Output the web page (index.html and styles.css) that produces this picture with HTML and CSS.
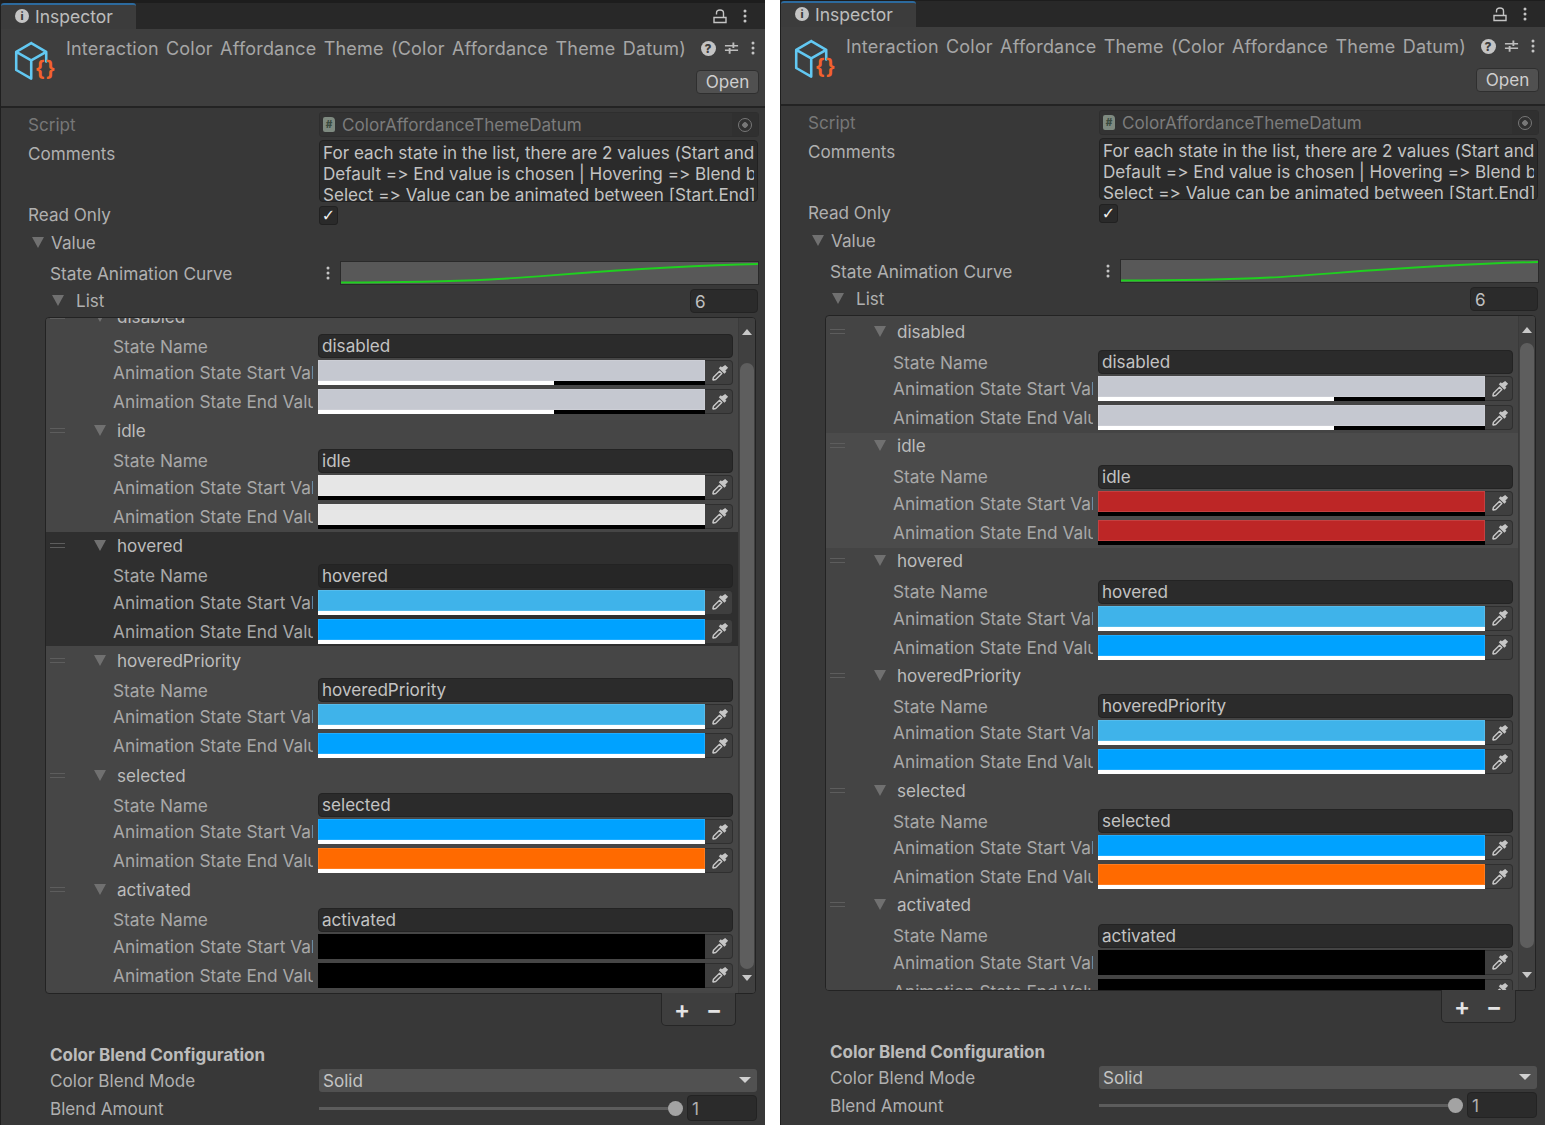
FILE: index.html
```html
<!DOCTYPE html>
<html lang="en">
<head>
<meta charset="utf-8">
<title>Inspector</title>
<link rel="stylesheet" href="styles.css">
</head>
<body>
<svg class="defs" width="0" height="0" aria-hidden="true">
  <symbol id="dropper" viewBox="0 0 16 16">
    <path d="M12.6.8l2.6 2.6-2.5 2.5 1 1-1.8 1.8-5-5 1.8-1.8 1 1z" fill="#c6c6c6"/>
    <path d="M7.6 6.4l2 2-5.4 5.4-2.2.5-.3-.3.5-2.2z" fill="none" stroke="#c6c6c6" stroke-width="1.3" stroke-linejoin="round"/>
  </symbol>
  <symbol id="cube" viewBox="0 0 42 40">
    <path d="M17 2 L31 10 V19 M17 2 L3 10 V27 L17 35 M3 10 L17 18 L31 10 M17 18 V35" fill="none" stroke="#62c8f2" stroke-width="2.4" stroke-linejoin="round" stroke-linecap="round"/>
  </symbol>
  <symbol id="lock" viewBox="0 0 14 15">
    <path d="M1 8.5h12v5H1zM3.5 5.5V4a3.5 3 0 0 1 7 0v4.5" fill="none" stroke="#c4c4c4" stroke-width="1.4"/>
  </symbol>
  <symbol id="sliders" viewBox="0 0 16 14">
    <path d="M1 4.5h14M1 9.5h14" stroke="#bdbdbd" stroke-width="1.6"/>
    <path d="M10 1v6M6 7v6" stroke="#bdbdbd" stroke-width="2"/>
  </symbol>
  <symbol id="dots" viewBox="0 0 4 14">
    <circle cx="2" cy="2" r="1.5" fill="#c4c4c4"/><circle cx="2" cy="7" r="1.5" fill="#c4c4c4"/><circle cx="2" cy="12" r="1.5" fill="#c4c4c4"/>
  </symbol>
</svg>
<main class="page">

<section class="panel panel-a">
  <header class="tabbar">
    <div class="tab"><span class="info-ic">i</span><span>Inspector</span></div>
    <div class="tab-tools">
      <svg class="ic-lock"><use href="#lock"/></svg>
      <svg class="ic-dots"><use href="#dots"/></svg>
    </div>
  </header>
  <div class="head">
    <div class="logo"><svg class="ic-cube"><use href="#cube"/></svg><span class="braces">{}</span></div>
    <div class="head-title">Interaction Color Affordance Theme (Color Affordance Theme Datum)</div>
    <div class="head-tools">
      <span class="help-ic">?</span>
      <svg class="ic-sliders"><use href="#sliders"/></svg>
      <svg class="ic-dots"><use href="#dots"/></svg>
    </div>
    <button class="open-btn">Open</button>
  </div>
  <div class="body">
    <div class="row row-script">
      <label class="lab lab-dim">Script</label>
      <div class="script-field"><span class="script-ic">#</span><span class="script-name">ColorAffordanceThemeDatum</span><span class="picker"><i></i></span></div>
    </div>
    <div class="row row-comments">
      <label class="lab lab-top">Comments</label>
      <div class="textarea"><div>For each state in the list, there are 2 values (Start and End).</div><div>Default =&gt; End value is chosen | Hovering =&gt; Blend between values</div><div>Select =&gt; Value can be animated between [Start,End]</div></div>
    </div>
    <div class="row row-read">
      <label class="lab">Read Only</label>
      <span class="check">✓</span>
    </div>
    <div class="row row-value">
      <span class="tri"></span><span class="lab">Value</span>
    </div>
    <div class="row row-curve">
      <label class="lab lab-in1">State Animation Curve</label>
      <svg class="ic-dots ic-dots-curve"><use href="#dots"/></svg>
      <div class="curve"><svg viewBox="0 0 420 22" preserveAspectRatio="none"><path d="M0 20.5 C60 20.5 100 20 150 17.5 S310 4 420 2" fill="none" stroke="#1fd01f" stroke-width="1.8"/></svg></div>
    </div>
    <div class="row row-list">
      <span class="tri tri-list"></span><span class="lab">List</span>
      <div class="count">6</div>
    </div>
    <div class="listbox">
      <div class="list-clip">
        <div class="list-inner scrolled">
          <div class="el"><div class="el-h"><span class="grip"></span><span class="tri tri-el"></span><span class="el-name">disabled</span></div>
            <div class="f f-name"><label>State Name</label><div class="input">disabled</div></div>
            <div class="f f-start"><label>Animation State Start Value</label><div class="color c-grey"><b></b></div><span class="drop"><svg><use href="#dropper"/></svg></span></div>
            <div class="f f-end"><label>Animation State End Value</label><div class="color c-grey"><b></b></div><span class="drop"><svg><use href="#dropper"/></svg></span></div></div>
          <div class="el"><div class="el-h"><span class="grip"></span><span class="tri tri-el"></span><span class="el-name">idle</span></div>
            <div class="f f-name"><label>State Name</label><div class="input">idle</div></div>
            <div class="f f-start"><label>Animation State Start Value</label><div class="color c-white a0"><b></b></div><span class="drop"><svg><use href="#dropper"/></svg></span></div>
            <div class="f f-end"><label>Animation State End Value</label><div class="color c-white a0"><b></b></div><span class="drop"><svg><use href="#dropper"/></svg></span></div></div>
          <div class="el el-hover"><div class="el-h"><span class="grip"></span><span class="tri tri-el"></span><span class="el-name">hovered</span></div>
            <div class="f f-name"><label>State Name</label><div class="input">hovered</div></div>
            <div class="f f-start"><label>Animation State Start Value</label><div class="color c-sky a1"><b></b></div><span class="drop"><svg><use href="#dropper"/></svg></span></div>
            <div class="f f-end"><label>Animation State End Value</label><div class="color c-blue a1"><b></b></div><span class="drop"><svg><use href="#dropper"/></svg></span></div></div>
          <div class="el"><div class="el-h"><span class="grip"></span><span class="tri tri-el"></span><span class="el-name">hoveredPriority</span></div>
            <div class="f f-name"><label>State Name</label><div class="input">hoveredPriority</div></div>
            <div class="f f-start"><label>Animation State Start Value</label><div class="color c-sky a1"><b></b></div><span class="drop"><svg><use href="#dropper"/></svg></span></div>
            <div class="f f-end"><label>Animation State End Value</label><div class="color c-blue a1"><b></b></div><span class="drop"><svg><use href="#dropper"/></svg></span></div></div>
          <div class="el"><div class="el-h"><span class="grip"></span><span class="tri tri-el"></span><span class="el-name">selected</span></div>
            <div class="f f-name"><label>State Name</label><div class="input">selected</div></div>
            <div class="f f-start"><label>Animation State Start Value</label><div class="color c-blue a1"><b></b></div><span class="drop"><svg><use href="#dropper"/></svg></span></div>
            <div class="f f-end"><label>Animation State End Value</label><div class="color c-orange a1"><b></b></div><span class="drop"><svg><use href="#dropper"/></svg></span></div></div>
          <div class="el"><div class="el-h"><span class="grip"></span><span class="tri tri-el"></span><span class="el-name">activated</span></div>
            <div class="f f-name"><label>State Name</label><div class="input">activated</div></div>
            <div class="f f-start"><label>Animation State Start Value</label><div class="color c-black"><b></b></div><span class="drop"><svg><use href="#dropper"/></svg></span></div>
            <div class="f f-end"><label>Animation State End Value</label><div class="color c-black"><b></b></div><span class="drop"><svg><use href="#dropper"/></svg></span></div></div>
        </div>
      </div>
      <div class="scrollbar">
        <span class="arrow-up"></span>
        <span class="track"><i class="thumb"></i></span>
        <span class="arrow-down"></span>
      </div>
    </div>
    <div class="list-foot"><span class="plus">+</span><span class="minus">−</span></div>
    <div class="section">Color Blend Configuration</div>
    <div class="row row-mode">
      <label class="lab lab-in1">Color Blend Mode</label>
      <div class="dropdown"><span>Solid</span><i></i></div>
    </div>
    <div class="row row-amount">
      <label class="lab lab-in1">Blend Amount</label>
      <div class="slider"><i></i></div>
      <div class="amount">1</div>
    </div>
  </div>
</section>

<section class="panel panel-b">
  <header class="tabbar">
    <div class="tab"><span class="info-ic">i</span><span>Inspector</span></div>
    <div class="tab-tools">
      <svg class="ic-lock"><use href="#lock"/></svg>
      <svg class="ic-dots"><use href="#dots"/></svg>
    </div>
  </header>
  <div class="head">
    <div class="logo"><svg class="ic-cube"><use href="#cube"/></svg><span class="braces">{}</span></div>
    <div class="head-title">Interaction Color Affordance Theme (Color Affordance Theme Datum)</div>
    <div class="head-tools">
      <span class="help-ic">?</span>
      <svg class="ic-sliders"><use href="#sliders"/></svg>
      <svg class="ic-dots"><use href="#dots"/></svg>
    </div>
    <button class="open-btn">Open</button>
  </div>
  <div class="body">
    <div class="row row-script">
      <label class="lab lab-dim">Script</label>
      <div class="script-field"><span class="script-ic">#</span><span class="script-name">ColorAffordanceThemeDatum</span><span class="picker"><i></i></span></div>
    </div>
    <div class="row row-comments">
      <label class="lab lab-top">Comments</label>
      <div class="textarea"><div>For each state in the list, there are 2 values (Start and End).</div><div>Default =&gt; End value is chosen | Hovering =&gt; Blend between values</div><div>Select =&gt; Value can be animated between [Start,End]</div></div>
    </div>
    <div class="row row-read">
      <label class="lab">Read Only</label>
      <span class="check">✓</span>
    </div>
    <div class="row row-value">
      <span class="tri"></span><span class="lab">Value</span>
    </div>
    <div class="row row-curve">
      <label class="lab lab-in1">State Animation Curve</label>
      <svg class="ic-dots ic-dots-curve"><use href="#dots"/></svg>
      <div class="curve"><svg viewBox="0 0 420 22" preserveAspectRatio="none"><path d="M0 20.5 C60 20.5 100 20 150 17.5 S310 4 420 2" fill="none" stroke="#1fd01f" stroke-width="1.8"/></svg></div>
    </div>
    <div class="row row-list">
      <span class="tri tri-list"></span><span class="lab">List</span>
      <div class="count">6</div>
    </div>
    <div class="listbox">
      <div class="list-clip">
        <div class="list-inner">
          <div class="el"><div class="el-h"><span class="grip"></span><span class="tri tri-el"></span><span class="el-name">disabled</span></div>
            <div class="f f-name"><label>State Name</label><div class="input">disabled</div></div>
            <div class="f f-start"><label>Animation State Start Value</label><div class="color c-grey"><b></b></div><span class="drop"><svg><use href="#dropper"/></svg></span></div>
            <div class="f f-end"><label>Animation State End Value</label><div class="color c-grey"><b></b></div><span class="drop"><svg><use href="#dropper"/></svg></span></div></div>
          <div class="el"><div class="el-h"><span class="grip"></span><span class="tri tri-el"></span><span class="el-name">idle</span></div>
            <div class="f f-name"><label>State Name</label><div class="input">idle</div></div>
            <div class="f f-start"><label>Animation State Start Value</label><div class="color c-red a0"><b></b></div><span class="drop"><svg><use href="#dropper"/></svg></span></div>
            <div class="f f-end"><label>Animation State End Value</label><div class="color c-red a0"><b></b></div><span class="drop"><svg><use href="#dropper"/></svg></span></div></div>
          <div class="el"><div class="el-h"><span class="grip"></span><span class="tri tri-el"></span><span class="el-name">hovered</span></div>
            <div class="f f-name"><label>State Name</label><div class="input">hovered</div></div>
            <div class="f f-start"><label>Animation State Start Value</label><div class="color c-sky a1"><b></b></div><span class="drop"><svg><use href="#dropper"/></svg></span></div>
            <div class="f f-end"><label>Animation State End Value</label><div class="color c-blue a1"><b></b></div><span class="drop"><svg><use href="#dropper"/></svg></span></div></div>
          <div class="el"><div class="el-h"><span class="grip"></span><span class="tri tri-el"></span><span class="el-name">hoveredPriority</span></div>
            <div class="f f-name"><label>State Name</label><div class="input">hoveredPriority</div></div>
            <div class="f f-start"><label>Animation State Start Value</label><div class="color c-sky a1"><b></b></div><span class="drop"><svg><use href="#dropper"/></svg></span></div>
            <div class="f f-end"><label>Animation State End Value</label><div class="color c-blue a1"><b></b></div><span class="drop"><svg><use href="#dropper"/></svg></span></div></div>
          <div class="el"><div class="el-h"><span class="grip"></span><span class="tri tri-el"></span><span class="el-name">selected</span></div>
            <div class="f f-name"><label>State Name</label><div class="input">selected</div></div>
            <div class="f f-start"><label>Animation State Start Value</label><div class="color c-blue a1"><b></b></div><span class="drop"><svg><use href="#dropper"/></svg></span></div>
            <div class="f f-end"><label>Animation State End Value</label><div class="color c-orange a1"><b></b></div><span class="drop"><svg><use href="#dropper"/></svg></span></div></div>
          <div class="el"><div class="el-h"><span class="grip"></span><span class="tri tri-el"></span><span class="el-name">activated</span></div>
            <div class="f f-name"><label>State Name</label><div class="input">activated</div></div>
            <div class="f f-start"><label>Animation State Start Value</label><div class="color c-black"><b></b></div><span class="drop"><svg><use href="#dropper"/></svg></span></div>
            <div class="f f-end"><label>Animation State End Value</label><div class="color c-black"><b></b></div><span class="drop"><svg><use href="#dropper"/></svg></span></div></div>
        </div>
      </div>
      <div class="scrollbar">
        <span class="arrow-up"></span>
        <span class="track"><i class="thumb"></i></span>
        <span class="arrow-down"></span>
      </div>
    </div>
    <div class="list-foot"><span class="plus">+</span><span class="minus">−</span></div>
    <div class="section">Color Blend Configuration</div>
    <div class="row row-mode">
      <label class="lab lab-in1">Color Blend Mode</label>
      <div class="dropdown"><span>Solid</span><i></i></div>
    </div>
    <div class="row row-amount">
      <label class="lab lab-in1">Blend Amount</label>
      <div class="slider"><i></i></div>
      <div class="amount">1</div>
    </div>
  </div>
</section>

</main>
</body>
</html>
```

FILE: styles.css
```css
* { box-sizing: border-box; }
html, body { margin: 0; padding: 0; background: #fff; height: 1125px; overflow: hidden; }
body { font-family: Inter, "Liberation Sans", sans-serif; font-size: 17.1px; color: #b4b4b4; font-feature-settings: "calt" 0; font-variant-ligatures: none; }
.defs { position: absolute; }
.page { display: flex; gap: 15px; align-items: flex-start; height: 1125px; }

.panel { width: 765px; height: 1125px; background: #383838; border-left: 1px solid #1f1f1f; overflow: hidden; flex: none; }
.panel-a { padding-top: 3px; background: linear-gradient(#1d1d1d 3px, #383838 3px); }
.panel-b { padding-top: 1px; background: linear-gradient(#1d1d1d 1px, #383838 1px); }

/* tab bar */
.tabbar { height: 26px; background: #282828; display: flex; justify-content: space-between; }
.tab { width: 135px; background: #3c3c3c; border-top: 2px solid #2c6a9e; display: flex; align-items: center; gap: 6px; padding: 0 0 2px 14px; color: #bdbdbd; border-radius: 3px 3px 0 0; font-size: 17.5px; }
.info-ic { width: 14px; height: 14px; border-radius: 50%; background: #c4c4c4; color: #3c3c3c; font-size: 11px; font-weight: 800; line-height: 14px; text-align: center; }
.tab-tools { display: flex; align-items: center; gap: 16px; padding-right: 18px; }
.ic-lock { width: 14px; height: 15px; }
.ic-dots { width: 4px; height: 14px; }

/* header */
.head { position: relative; height: 79px; background: #3e3e3e; border-bottom: 2px solid #232323; display: grid; grid-template-columns: 65px 1fr 60px; grid-template-rows: 38px 24px; padding-right: 6px; }
.logo { position: relative; grid-row: 1 / 3; padding: 12px 0 0 12px; }
.ic-cube { display: block; width: 45px; height: 43px; }
.braces { position: absolute; left: 34px; top: 28px; color: #f2622e; font-size: 21px; font-weight: 700; line-height: 24px; letter-spacing: 1px; }
.head-title { font-size: 18px; color: #a6a6a6; letter-spacing: .2px; word-spacing: 2px; white-space: nowrap; padding-top: 8px; line-height: 24px; }
.head-tools { display: flex; align-items: center; padding-left: 1.5px; height: 38px; margin-top: 0; }
.help-ic { width: 15px; height: 15px; border-radius: 50%; background: #c4c4c4; color: #3e3e3e; font-size: 12px; font-weight: 800; line-height: 15px; text-align: center; flex: none; }
.ic-sliders { width: 15px; height: 14px; margin: 0 12.5px 0 8px; flex: none; }
.open-btn { grid-column: 3; grid-row: 2; justify-self: end; margin: 3px 0 0; width: 63px; height: 24px; padding: 0; background: #505050; border: 1px solid #2f2f2f; border-radius: 4px; font: inherit; color: #cfcfcf; line-height: 20px; }

/* body rows */
.body { padding: 4px 6px 0 27px; }
.row { display: flex; align-items: center; }
.lab { color: #b0b0b0; white-space: nowrap; }
.lab-dim { color: #777; }
.row > .lab:first-child { width: 291px; flex: none; }
.row-script { height: 25px; }
.script-field { width: 440px; height: 25px; background: #333; border: 1px solid #2e2e2e; border-radius: 3px; display: flex; align-items: center; padding-left: 3px; color: #7c7c7c; position: relative; margin-right: -1px; }
.script-ic { width: 12px; height: 15px; background: #7e8a80; color: #3a4a3e; font-size: 10px; font-weight: 800; line-height: 15px; text-align: center; border-radius: 2px 4px 2px 2px; margin-right: 7px; }
.script-name { flex: 1; }
.picker { width: 26px; height: 23px; background: #303030; display: flex; align-items: center; justify-content: center; }
.picker i { width: 14px; height: 14px; border: 1.5px solid #777; border-radius: 50%; background: radial-gradient(circle, #777 2.5px, transparent 3px); }

.row-comments { align-items: flex-start; margin-top: 3px; height: 62px; }
.lab-top { padding-top: 3px; }
.textarea { width: 439px; height: 62px; overflow: hidden; background: #2b2b2b; border: 1px solid #212121; border-radius: 4px; padding: .5px 3px; line-height: 21px; color: #c3c3c3; white-space: nowrap; }
.textarea div { overflow: hidden; }
.row-read { height: 25px; }
.check { width: 19px; height: 19px; background: #2a2a2a; border: 1px solid #212121; border-radius: 3px; color: #f0f0f0; font-size: 16px; line-height: 17px; text-align: center; font-weight: 700; font-family: "DejaVu Sans", sans-serif; margin-top: 1px; }
.row-value { height: 31px; padding-left: 4px; }
.row-value .tri { margin-right: 7px; }
.tri { width: 0; height: 0; border-left: 6.5px solid transparent; border-right: 6.5px solid transparent; border-top: 11px solid #707070; flex: none; }
.row-curve { height: 30px; position: relative; }
.row .lab-in1 { padding-left: 22px; }
.ic-dots-curve { flex: none; margin-right: 10px; }
.row-curve > .lab { width: 298px !important; font-size: 17.3px; }
.curve { width: 419px; height: 24px; margin-right: -5px; flex: none; background: #585858; border: 1px solid #2a2a2a; }
.curve svg { display: block; width: 100%; height: 100%; }
.row-list { height: 25px; padding-left: 24px; }
.tri-list { margin-right: 12px; }
.row-list .lab { flex: 1; }
.count { width: 68px; height: 24px; background: #2b2b2b; border: 1px solid #232323; border-radius: 4px; padding-left: 4px; color: #c0c0c0; line-height: 24px; margin-right: 1px; flex: none; }

/* list */
.listbox { margin: 4px 3px 0 17px; height: 677px; border: 1px solid #232323; border-radius: 4px; display: flex; background: #454545; overflow: hidden; }
.panel-b .listbox { height: 676px; }
.list-clip { flex: 1; overflow: hidden; }
.list-inner { margin-top: 2px; }
.list-inner.scrolled { margin-top: -16px; }
.el { height: 114.75px; }
.panel-a .el { background: #464646; }
.panel-a .el.el-hover { background: #2f2f2f; }
.panel-b .el { background: #444; }
.panel-b .el:nth-child(2) { background: #4b4b4b; }
.el-h { height: 26px; display: flex; align-items: center; color: #bcbcbc; }
.scrolled .el-h { height: 28px; }
.grip { width: 15px; height: 5px; border-top: 1px solid #5d5d5d; border-bottom: 1px solid #5d5d5d; margin: 0 29px 0 4px; }
.tri-el { margin-right: 11px; }
.el-name { white-space: nowrap; }
.f { display: flex; align-items: center; padding-left: 67px; }
.f label { width: 200px; margin-right: 5px; flex: none; overflow: hidden; white-space: nowrap; color: #a8a8a8; font-size: 17.3px; }
.f-name { height: 24px; margin-top: 6px; }
.scrolled .f-name { margin-top: 4px; }
.f-start { height: 25px; margin-top: 2px; }
.f-end { height: 25px; margin-top: 4px; }
.input { width: 415px; height: 24px; background: #2b2b2b; border: 1px solid #232323; border-radius: 4px; padding-left: 3px; color: #c3c3c3; line-height: 22px; }
.el-hover .input { background: #262626; }
.color { width: 387px; height: 25px; background: #333; display: flex; flex-direction: column; flex: none; position: relative; }
.color::before { content: ""; flex: 1; display: block; background: var(--swatch); border: 1px solid rgba(255,255,255,.12); }
.color b { display: block; height: 4px; flex: none; background: linear-gradient(90deg, #fff 61%, #000 61%); }
.color.a0 b { background: #000; }
.color.a1 b { background: #fff; }
.color.c-black b { background: #000; }
.c-grey { --swatch: #c5c8d0; }
.c-white { --swatch: #e6e6e6; }
.c-sky { --swatch: #3fb3ea; }
.c-blue { --swatch: #00a2ff; }
.c-orange { --swatch: #ff6a00; }
.c-black { --swatch: #000; }
.c-red { --swatch: #bd2626; }
.color.c-black::before { border: 0; }
.drop { width: 28px; height: 25px; flex: none; background: #3f3f3f; border: 1px solid #2f2f2f; border-left: 0; border-radius: 0 4px 4px 0; display: flex; align-items: center; justify-content: center; padding-left: 2px; }
.drop svg { width: 18px; height: 18px; }

.scrollbar { width: 17px; flex: none; background: #404040; display: flex; flex-direction: column; align-items: center; border-left: 1px solid #3a3a3a; }
.arrow-up, .arrow-down { flex: none; width: 0; height: 0; border-left: 5px solid transparent; border-right: 5px solid transparent; }
.arrow-up { border-bottom: 6px solid #c8c8c8; margin-top: 11px; }
.arrow-down { border-top: 6px solid #c8c8c8; margin-bottom: 12px; }
.track { flex: 1; width: 100%; display: flex; justify-content: center; padding: 0 1px; }
.thumb { width: 14px; background: #5e5e5e; border-radius: 7px; margin: 28px 0 6px; display: block; flex: none; }
.panel-b .thumb { margin: 10px 0 24px; }

.list-foot { margin: -1px 23px 0 auto; width: 75px; height: 33px; background: #3e3e3e; border: 1px solid #262626; border-top: 0; border-radius: 0 0 5px 5px; display: flex; align-items: center; gap: 18px; padding: 2px 0 0 12px; color: #e4e4e4; font-size: 24px; line-height: 24px; font-weight: 600; position: relative; }
.plus, .minus { width: 14px; text-align: center; }

.section { padding-left: 22px; margin-top: 18px; line-height: 22px; font-weight: 700; color: #bcbcbc; font-size: 17px; }
.row-mode { height: 26px; margin-top: 1px; }
.dropdown { width: 438px; height: 23px; background: #515151; border-radius: 3px; padding: 0 4px; display: flex; align-items: center; justify-content: space-between; color: #c4c4c4; }
.dropdown i { width: 0; height: 0; border-left: 6px solid transparent; border-right: 6px solid transparent; border-top: 6px solid #d0d0d0; margin-right: 2px; }
.row-amount { height: 26px; margin-top: 2px; }
.slider { width: 357px; height: 3px; background: #5c5c5c; position: relative; margin-right: 11px; flex: none; }
.slider i { position: absolute; right: -7px; top: -6px; width: 15px; height: 15px; border-radius: 50%; background: #a3a3a3; }
.amount { width: 70px; height: 26px; background: #2b2b2b; border: 1px solid #232323; border-radius: 4px; padding-left: 4px; line-height: 26px; color: #b0b0b0; flex: none; }
```
